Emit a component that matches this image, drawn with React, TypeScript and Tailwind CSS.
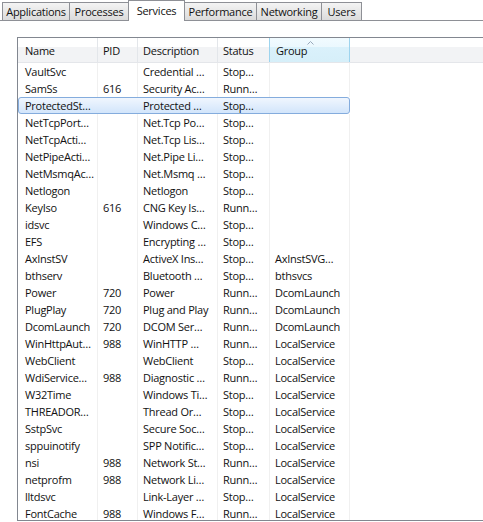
import React from 'react';

interface ServiceRow {
  name: string;
  pid: string;
  description: string;
  status: string;
  group: string;
}

const rows: ServiceRow[] = [
  { name: 'VaultSvc', pid: '', description: 'Credential …', status: 'Stop…', group: '' },
  { name: 'SamSs', pid: '616', description: 'Security Ac…', status: 'Runn…', group: '' },
  { name: 'ProtectedSt…', pid: '', description: 'Protected …', status: 'Stop…', group: '' },
  { name: 'NetTcpPort…', pid: '', description: 'Net.Tcp Po…', status: 'Stop…', group: '' },
  { name: 'NetTcpActi…', pid: '', description: 'Net.Tcp Lis…', status: 'Stop…', group: '' },
  { name: 'NetPipeActi…', pid: '', description: 'Net.Pipe Li…', status: 'Stop…', group: '' },
  { name: 'NetMsmqAc…', pid: '', description: 'Net.Msmq …', status: 'Stop…', group: '' },
  { name: 'Netlogon', pid: '', description: 'Netlogon', status: 'Stop…', group: '' },
  { name: 'KeyIso', pid: '616', description: 'CNG Key Is…', status: 'Runn…', group: '' },
  { name: 'idsvc', pid: '', description: 'Windows C…', status: 'Stop…', group: '' },
  { name: 'EFS', pid: '', description: 'Encrypting …', status: 'Stop…', group: '' },
  { name: 'AxInstSV', pid: '', description: 'ActiveX Ins…', status: 'Stop…', group: 'AxInstSVG…' },
  { name: 'bthserv', pid: '', description: 'Bluetooth …', status: 'Stop…', group: 'bthsvcs' },
  { name: 'Power', pid: '720', description: 'Power', status: 'Runn…', group: 'DcomLaunch' },
  { name: 'PlugPlay', pid: '720', description: 'Plug and Play', status: 'Runn…', group: 'DcomLaunch' },
  { name: 'DcomLaunch', pid: '720', description: 'DCOM Ser…', status: 'Runn…', group: 'DcomLaunch' },
  { name: 'WinHttpAut…', pid: '988', description: 'WinHTTP …', status: 'Runn…', group: 'LocalService' },
  { name: 'WebClient', pid: '', description: 'WebClient', status: 'Stop…', group: 'LocalService' },
  { name: 'WdiService…', pid: '988', description: 'Diagnostic …', status: 'Runn…', group: 'LocalService' },
  { name: 'W32Time', pid: '', description: 'Windows Ti…', status: 'Stop…', group: 'LocalService' },
  { name: 'THREADOR…', pid: '', description: 'Thread Or…', status: 'Stop…', group: 'LocalService' },
  { name: 'SstpSvc', pid: '', description: 'Secure Soc…', status: 'Stop…', group: 'LocalService' },
  { name: 'sppuinotify', pid: '', description: 'SPP Notific…', status: 'Stop…', group: 'LocalService' },
  { name: 'nsi', pid: '988', description: 'Network St…', status: 'Runn…', group: 'LocalService' },
  { name: 'netprofm', pid: '988', description: 'Network Li…', status: 'Runn…', group: 'LocalService' },
  { name: 'lltdsvc', pid: '', description: 'Link-Layer …', status: 'Stop…', group: 'LocalService' },
  { name: 'FontCache', pid: '988', description: 'Windows F…', status: 'Runn…', group: 'LocalService' },
];

const tabs = [
  { label: 'Applications', w: 'w-[68px]' },
  { label: 'Processes', w: 'w-[60px]' },
  { label: 'Services', w: 'w-[57px]', active: true },
  { label: 'Performance', w: 'w-[73px]' },
  { label: 'Networking', w: 'w-[66px]' },
  { label: 'Users', w: 'w-[41px]' },
];

const SELECTED = 2;

export default function App() {
  return (
    <div className="w-[483px] h-[522px] overflow-hidden bg-white text-[11px] tracking-[-0.25px] text-[#111] font-['Open_Sans',sans-serif] leading-none">
      {/* tab strip */}
      <div className="relative h-[21px] border-b border-[#8e9096] flex items-end pl-[2px]">
        {tabs.map((t) =>
          t.active ? (
            <div
              key={t.label}
              className={`${t.w} -ml-px h-[21px] -mb-px relative z-10 bg-white border border-b-0 border-[#8e9096] flex items-start justify-center pt-[4px]`}
            >
              {t.label}
            </div>
          ) : (
            <div
              key={t.label}
              className={`${t.w} -ml-px first:ml-0 h-[18px] border border-b-0 border-[#8e9096] bg-[linear-gradient(to_bottom,#f4f4f4,#dbdbdb)] flex items-center justify-center`}
            >
              {t.label}
            </div>
          )
        )}
      </div>

      {/* list view */}
      <div className="ml-[17px] mt-[16px] h-[484px] border-l border-t border-b border-[#828790] overflow-hidden">
        <div className="flex h-[25px] border-b border-[#e4e6ea] bg-[linear-gradient(to_bottom,#ffffff_0%,#ffffff_38%,#f2f3f5_38%,#f2f3f5_100%)]">
          <div className="w-[80px] pl-[7px] border-r border-[#e3e6ea] flex items-center">Name</div>
          <div className="w-[40px] pl-[5px] border-r border-[#e3e6ea] flex items-center">PID</div>
          <div className="w-[80px] pl-[5px] border-r border-[#e3e6ea] flex items-center">Description</div>
          <div className="w-[52px] pl-[5px] border-r border-[#e3e6ea] flex items-center">Status</div>
          <div className="relative w-[81px] pl-[6px] border-x border-[#9ed4ee] -ml-px flex items-center bg-[linear-gradient(to_bottom,#f1fbff_0%,#ebf8fe_38%,#daf1fb_38%,#d6eff9_100%)]">
            Group
            <svg className="absolute left-[37px] top-[3px]" width="7" height="4" viewBox="0 0 7 4">
              <path d="M0.5 3.5 L3.5 0.5 L6.5 3.5" fill="none" stroke="#98a9bb" strokeWidth="1" />
            </svg>
          </div>
        </div>

        {rows.map((r, i) => {
          const sel = i === SELECTED;
          const div = sel ? 'border-transparent' : 'border-[#f0f0f0]';
          return (
            <div key={r.name} className="relative flex h-[17px] items-center">
              {sel && (
                <div className="absolute left-0 top-0 w-[332px] h-[17px] rounded-[3px] border border-[#84acdd] bg-[linear-gradient(to_bottom,#f0f6fe,#d2e5fb)]" />
              )}
              <div className={`relative w-[80px] h-full pl-[7px] border-r ${div} flex items-center whitespace-nowrap`}>{r.name}</div>
              <div className={`relative w-[40px] h-full pl-[5px] border-r ${div} flex items-center`}>{r.pid}</div>
              <div className={`relative w-[80px] h-full pl-[5px] border-r ${div} flex items-center whitespace-nowrap`}>{r.description}</div>
              <div className={`relative w-[52px] h-full pl-[5px] border-r ${div} flex items-center whitespace-nowrap`}>{r.status}</div>
              <div className={`relative w-[80px] h-full pl-[5px] border-r ${div} flex items-center whitespace-nowrap`}>{r.group}</div>
            </div>
          );
        })}
      </div>
    </div>
  );
}
